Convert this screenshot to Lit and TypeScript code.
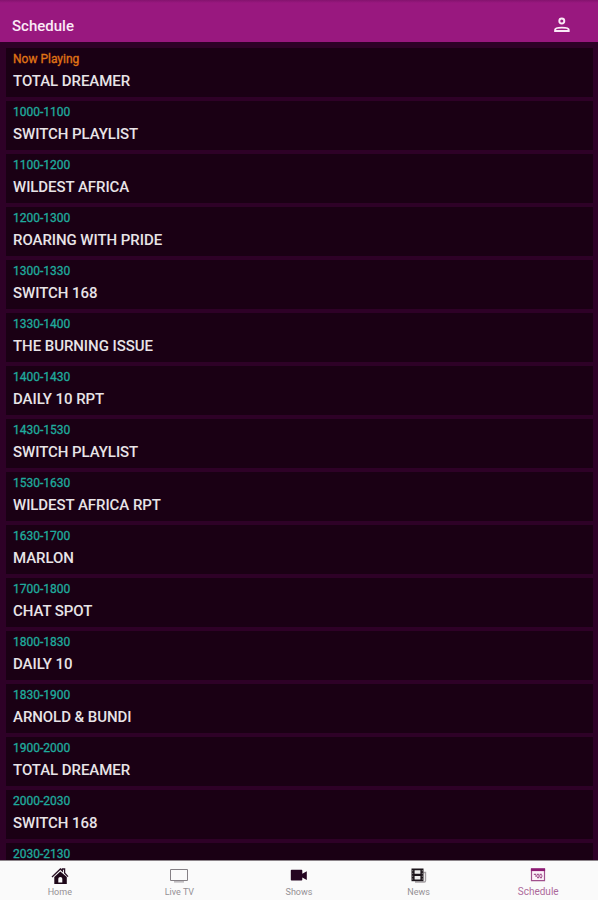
import { LitElement, html, svg, css } from "lit";
import { customElement } from "lit/decorators.js";
import { classMap } from "lit/directives/class-map.js";

const programmes: [string, string][] = [
  ["Now Playing", "TOTAL DREAMER"],
  ["1000-1100", "SWITCH PLAYLIST"],
  ["1100-1200", "WILDEST AFRICA"],
  ["1200-1300", "ROARING WITH PRIDE"],
  ["1300-1330", "SWITCH 168"],
  ["1330-1400", "THE BURNING ISSUE"],
  ["1400-1430", "DAILY 10 RPT"],
  ["1430-1530", "SWITCH PLAYLIST"],
  ["1530-1630", "WILDEST AFRICA RPT"],
  ["1630-1700", "MARLON"],
  ["1700-1800", "CHAT SPOT"],
  ["1800-1830", "DAILY 10"],
  ["1830-1900", "ARNOLD & BUNDI"],
  ["1900-2000", "TOTAL DREAMER"],
  ["2000-2030", "SWITCH 168"],
  ["2030-2130", ""],
];

const icons = {
  home: svg`<path d="M2 11 10.400 3l2 2V3h2.200v4l3.400 3.600" fill="none" stroke="#2a1225" stroke-width="1.300"/>
    <path d="M10.300 5.400 4.300 11v7h12.500v-7z" fill="#1d0718"/>
    <path d="M8.300 16.600v-3.900q0-1.800 2-1.800t2 1.800v3.900z" fill="#fafafa"/>`,
  tv: svg`<path d="M1.500 3.500h17v11h-17z" fill="none" stroke="#858085"/><path d="M5 15.900h10" stroke="#9a959a"/>`,
  shows: svg`<path d="M1.800 4.600q0-.8.8-.8H12.500q.8 0 .8.800v3.200l4.500-2.500v8.600l-4.500-2.500v2.400q0 .8-.8.800H2.600q-.8 0-.8-.8z" fill="#240420"/>`,
  news: svg`<path d="M14.500 6.500h2v8.300q0 1.200-1.200 1.200H6" fill="none" stroke="#a5a0a4" stroke-width="1.400"/>
    <path d="M2.500 2.500h12v12.700h-12z" fill="#1c151b"/>
    <path d="M5.600 4.200h5.800v3.500H5.600zM5.600 9.900h5.800v3.600H5.600z" fill="#eee"/>
    <path d="M3.700 4v10.500M13.300 4v10.500" stroke="#aaa" stroke-width=".7" stroke-dasharray="1.300 1.500"/>`,
  schedule: svg`<path d="M3.500 3.500h13v11.200h-13z" fill="#fdf2fa" stroke="#a0508d" stroke-width="1.200"/>
    <path d="M2.900 2.200h14.200v2.900H2.900z" fill="#8d1b73"/>
    <path d="M5.800 8.300h8.700M7.300 10h7.200M9 11.700h5" stroke="#a3568f" stroke-width="1.300" stroke-dasharray="2.200 .7"/>`,
};

const tabs: { label: string; icon: keyof typeof icons; active?: boolean }[] = [
  { label: "Home", icon: "home" },
  { label: "Live TV", icon: "tv" },
  { label: "Shows", icon: "shows" },
  { label: "News", icon: "news" },
  { label: "Schedule", icon: "schedule", active: true },
];

@customElement("app-root")
export class AppRoot extends LitElement {
  static styles = css`
    :host {
      display: flex;
      flex-direction: column;
      height: 900px;
      overflow: hidden;
      background: #2e0127;
      font-family: Roboto, sans-serif;
    }
    header {
      flex: none;
      box-sizing: border-box;
      height: 42px;
      padding: 8px 27px 0 12px;
      display: flex;
      align-items: center;
      justify-content: space-between;
      background: linear-gradient(#84136e 0, #99187f 3px);
      color: #fbeaf7;
    }
    h1 {
      margin: 2px 0 0;
      font-size: 15px;
      line-height: 18px;
      font-weight: 500;
    }
    .person {
      display: block;
      width: 18px;
      height: 18px;
    }
    main {
      flex: 1;
      min-height: 0;
      overflow: hidden;
      padding: 6px 5px 0 6px;
      display: flex;
      flex-direction: column;
      gap: 4px;
    }
    .card {
      flex: none;
      box-sizing: border-box;
      height: 49px;
      padding: 4px 7px 0;
      background: #1a0014;
    }
    .time {
      font-size: 12px;
      line-height: 15px;
      color: #1fab9d;
      -webkit-text-stroke: 0.3px;
    }
    .now {
      color: #e07414;
    }
    .title {
      margin-top: 4px;
      font-size: 15px;
      line-height: 20px;
      font-weight: 500;
      letter-spacing: -0.06px;
      color: #e8e4e7;
    }
    nav {
      flex: none;
      box-sizing: border-box;
      height: 40px;
      display: grid;
      grid-template-columns: repeat(5, 1fr);
      background: #fafafa;
      border-top: 1px solid #8c858a;
    }
    .tab {
      display: flex;
      flex-direction: column;
      align-items: center;
      padding-top: 5px;
      color: #959095;
      font-size: 9px;
      line-height: 13px;
    }
    .tab svg {
      width: 20px;
      height: 20px;
    }
    .active {
      color: #ad6a9b;
      font-size: 10px;
      line-height: 12px;
    }
  `;

  render() {
    return html`
      <header>
        <h1>Schedule</h1>
        <svg class="person" viewBox="0 0 18 18" fill="none" stroke="#fbeaf7" stroke-width="1.900">
          <circle cx="8.800" cy="5" r="2.500" />
          <path d="M2.100 15v-1.200q0-2.200 6.800-2.200t6.800 2.200V15z" />
        </svg>
      </header>
      <main>
        ${programmes.map(
          ([time, title], i) => html`<section class="card">
            <div class=${classMap({ time: true, now: i === 0 })}>${time}</div>
            ${title ? html`<div class="title">${title}</div>` : ""}
          </section>`
        )}
      </main>
      <nav>
        ${tabs.map(
          (t) => html`<div class=${classMap({ tab: true, active: !!t.active })}>
            <svg viewBox="0 0 20 20">${icons[t.icon]}</svg>
            <span>${t.label}</span>
          </div>`
        )}
      </nav>
    `;
  }
}
